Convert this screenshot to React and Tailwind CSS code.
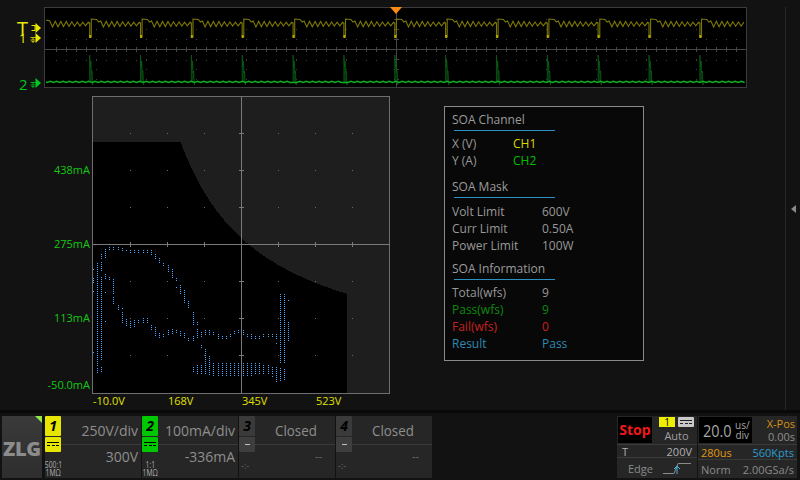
import React from "react";

const FONT = { fontFamily: '"Open Sans","Noto Sans",sans-serif' };

const PERIOD = 50.85;
const SPIKES = Array.from({ length: 14 }, (_, k) => 37.8 + PERIOD * k);

function yellowPath() {
  let d = "M45 19";
  const ripple = (from, to) => {
    let x = from;
    let up = true;
    let s = "";
    while (x < to) {
      const t = (x - from) / 40;
      const amp = 3 - 1.3 * Math.min(t, 1);
      s += `L${x.toFixed(1)} ${(23 + (up ? -amp : amp)).toFixed(1)}`;
      x += 2.75;
      up = !up;
    }
    return s;
  };
  SPIKES.forEach((p) => {
    if (p + 52 < 45) return;
    if (p >= 45) {
      d += `L${p.toFixed(1)} 22L${p.toFixed(1)} 36L${(p + 1.6).toFixed(1)} 36L${(p + 1.6).toFixed(1)} 18L${(p + 7).toFixed(1)} 18.5L${(p + 9).toFixed(1)} 21`;
    }
    const start = Math.max(p + 11, 46);
    const end = Math.min(p + PERIOD - 1, 745.5);
    if (start < end) d += ripple(start, end);
  });
  return d;
}

function greenBase() {
  let d = "M45 81";
  for (let x = 46; x <= 745; x += 3.2) {
    const phase = ((x - 37.8) % PERIOD + PERIOD) % PERIOD;
    if (phase < 1) continue;
    const y = 81 + (Math.round(x / 3.2) % 2 ? -0.7 : 0.5);
    d += `L${x.toFixed(1)} ${y.toFixed(1)}`;
  }
  return d;
}

function Scope() {
  const rows = [38, 59];
  const cols = [95, 145, 195, 245, 295, 345, 395, 445, 495, 545, 595, 645, 695];
  const dots = [];
  rows.forEach((y) => {
    for (let x = 55; x < 746; x += 10) dots.push([x, y]);
  });
  cols.forEach((x) => {
    for (let y = 18; y < 88; y += 10) if (y !== 48) dots.push([x, y]);
  });
  return (
    <div className="relative h-[81px] w-[703px] border border-[#3c3c3c] bg-black">
      <svg viewBox="44 7 701 79" className="block h-[79px] w-[701px]" shapeRendering="crispEdges">
        {dots.map(([x, y], i) => (
          <rect key={i} x={x} y={y} width="1" height="1" fill="#3d3d3d" />
        ))}
        <rect x="44" y="48" width="702" height="1" fill="#474747" />
        {Array.from({ length: 70 }, (_, i) => (
          <rect key={i} x={55 + i * 10} y="46" width="1" height="5" fill="#474747" />
        ))}
        <rect x="395" y="7" width="1" height="81" fill="#474747" />
        {[18, 28, 38, 58, 68, 78].map((y) => (
          <rect key={y} x="393" y={y} width="5" height="1" fill="#474747" />
        ))}
        <g shapeRendering="auto">
          <path d={yellowPath()} fill="none" stroke="#7c7706" strokeWidth="1.1" />
          {SPIKES.filter((p) => p >= 45 && p < 745).map((p) => (
            <g key={p}>
              <rect x={p - 0.5} y="34" width="2" height="3" fill="#b0aa00" />
              <path
                d={`M${p} 81L${p} 54L${p + 0.6} 66L${p + 1.2} 60L${p + 1.8} 72L${p + 2.4} 70L${p + 3} 84L${p + 3.6} 81`}
                fill="#06340c"
                stroke="#0a5c14"
                strokeWidth="0.8"
              />
            </g>
          ))}
          <path d={greenBase()} fill="none" stroke="#0cb022" strokeWidth="1.5" />
        </g>
      </svg>
      <div className="absolute left-[345px] top-[-1px] h-0 w-0 border-x-[6px] border-t-[7px] border-x-transparent border-t-[#ff8a12]" />
    </div>
  );
}

function GroundArrow({ color, className }) {
  return (
    <svg viewBox="0 0 11 10" className={className} width="11" height="10">
      <path d="M5.5 0L11 5L5.5 10Z" fill={color} />
      <path d="M0.5 4.5H6M3 4.5V7M0.5 7H5.5M1.5 8.5H4.5M2.5 9.5H3.5" fill="none" stroke={color} strokeWidth="0.8" />
    </svg>
  );
}

function Markers() {
  return (
    <div className="relative h-[81px] w-[44px] shrink-0">
      <span className="absolute left-[17px] top-[17px] h-[10px] text-[20px] leading-[10px] text-[#e8e800]">T</span>
      <span className="absolute left-[19px] top-[27px] h-[8px] text-[13px] leading-[8px] text-[#e8e800]">1</span>
      <svg viewBox="0 0 11 10" width="11" height="10" className="absolute left-[30px] top-[16px]">
        <path d="M5.5 0L11 5L5.5 10Z" fill="#e8e800" />
        <path d="M1.5 2.5H6M5 2.5V7.5H1.5" fill="none" stroke="#e8e800" strokeWidth="1" />
      </svg>
      <GroundArrow color="#e8e800" className="absolute left-[30px] top-[26px]" />
      <span className="absolute left-[19px] top-[69px] text-[15px] leading-[16px] text-[#00c81e]">2</span>
      <GroundArrow color="#00c81e" className="absolute left-[30px] top-[71px]" />
    </div>
  );
}

// columns of the scatter: x, then [y1, y2] runs at a 2 px step
const COLUMNS = [
  [93, [269, 269], [278, 283], [291, 291], [352, 352]],
  [97, [263, 365], [368, 372]],
  [101, [254, 258], [262, 270], [277, 360], [367, 372]],
  [105, [249, 257], [274, 278], [292, 292], [321, 321]],
  [109, [247, 249], [277, 279]],
  [113, [247, 249], [279, 293], [297, 303]],
  [118, [247, 249], [305, 309]],
  [122, [248, 250], [308, 308], [312, 322]],
  [126, [250, 250], [319, 326]],
  [130, [250, 253], [321, 327]],
  [134, [250, 253], [320, 327]],
  [138, [250, 253], [320, 323]],
  [143, [250, 253], [318, 323]],
  [147, [250, 253], [318, 323]],
  [151, [250, 255], [325, 330]],
  [155, [254, 258], [327, 335]],
  [159, [258, 262], [333, 337]],
  [163, [263, 266], [334, 337]],
  [168, [265, 271], [330, 335]],
  [172, [269, 278], [329, 333]],
  [176, [278, 280], [287, 287], [330, 333]],
  [180, [285, 293], [331, 335]],
  [184, [290, 302], [333, 338]],
  [188, [301, 308], [338, 341]],
  [193, [312, 325], [336, 341], [367, 372]],
  [197, [322, 325], [329, 338], [365, 373]],
  [201, [332, 337], [345, 347], [365, 373]],
  [205, [330, 335], [349, 362], [363, 374]],
  [209, [330, 335], [356, 375]],
  [213, [332, 334], [363, 375]],
  [218, [334, 338], [363, 375]],
  [222, [336, 338], [363, 375]],
  [226, [336, 338], [363, 375]],
  [230, [334, 336], [363, 375]],
  [234, [331, 334], [363, 375]],
  [238, [330, 333], [363, 375]],
  [243, [330, 334], [363, 375]],
  [247, [334, 336], [363, 375]],
  [251, [334, 338], [363, 375]],
  [255, [336, 338], [363, 373]],
  [259, [336, 338], [363, 373]],
  [263, [334, 336], [365, 373]],
  [268, [334, 336], [365, 373]],
  [272, [334, 336], [367, 373], [376, 376]],
  [276, [334, 338], [343, 343], [367, 381]],
  [280, [294, 362], [368, 381]],
  [284, [294, 362], [369, 380]],
  [288, [300, 300], [322, 341]],
];

function maskPoints() {
  // 100 W power limit in plot coordinates
  const pts = ["93,394", "93,142"];
  for (let v = 200; v <= 600; v += 4) {
    const x = 93 + (v + 10) / 2.397;
    const y = 393 - (100000 / v + 50) / 2.19;
    pts.push(`${x.toFixed(1)},${y.toFixed(1)}`);
  }
  pts.push("347,394");
  return pts.join(" ");
}

function Plot() {
  const gx = [130, 167, 204, 278, 315, 352];
  const gy = [133, 170, 207, 281, 318, 355];
  return (
    <div className="h-[298px] w-[298px] border border-[#6e6e6e] bg-[#1e1e1e]">
      <svg viewBox="93 97 296 296" className="block h-[296px] w-[296px]" shapeRendering="crispEdges">
        <polygon points={maskPoints()} fill="#000" />
        {gx.concat(241).map((x) =>
          gy.concat(244).map((y) => <rect key={`${x}-${y}`} x={x} y={y} width="1" height="1" fill="#6a6a6a" />)
        )}
        <rect x="241" y="97" width="1" height="296" fill="#7a7a7a" />
        <rect x="93" y="244" width="296" height="1" fill="#7a7a7a" />
        {gx.map((x) => (
          <rect key={x} x={x} y="242" width="1" height="5" fill="#7a7a7a" />
        ))}
        {gy.map((y) => (
          <rect key={y} x="239" y={y} width="5" height="1" fill="#7a7a7a" />
        ))}
        {COLUMNS.flatMap(([x, ...runs]) =>
          runs.flatMap(([a, b]) => {
            const out = [];
            for (let y = a; y <= b; y += 2) {
              out.push(<rect key={`${x}-${y}`} x={x} y={y} width="1" height="1" fill="#4aa8ff" />);
            }
            return out;
          })
        )}
      </svg>
    </div>
  );
}

function YLabels() {
  return (
    <div className="flex h-[298px] w-[92px] flex-col items-end pr-[2px] text-[11px] leading-[14px] text-[#14c814]">
      <span className="mt-[67px] h-[74px]">438mA</span>
      <span className="h-[74px]">275mA</span>
      <span className="h-[67px]">113mA</span>
      <span>-50.0mA</span>
    </div>
  );
}

function XLabels() {
  return (
    <div className="ml-[92px] flex h-[14px] text-[11px] leading-[14px] text-[#e0e000]">
      <span className="w-[76px] pl-[1px]">-10.0V</span>
      <span className="w-[74px]">168V</span>
      <span className="w-[74px]">345V</span>
      <span>523V</span>
    </div>
  );
}

function Heading({ children }) {
  return (
    <div className="flex h-[24px] w-[103px] flex-col justify-between pt-[4px]">
      <div className="text-[12px] leading-[18px] text-[#9c9c9c]">{children}</div>
      <div className="ml-[2px] h-px bg-[#2c90c0]" />
    </div>
  );
}

function Row({ label, value, cls = "text-[#989898]", valCls, col = "w-[90px]" }) {
  return (
    <div className={`flex h-[17px] text-[12px] leading-[17px] ${cls}`}>
      <span className={col}>{label}</span>
      <span className={valCls}>{value}</span>
    </div>
  );
}

function InfoPanel() {
  return (
    <div className="mt-[10px] ml-[54px] flex h-[255px] w-[200px] flex-col border border-[#8a8a8a] bg-[#080808] pl-[7px]">
      <Heading>SOA Channel</Heading>
      <div className="mt-[4px]">
        <Row label="X (V)" value="CH1" col="w-[61px]" valCls="text-[#d8d800]" />
        <Row label="Y (A)" value="CH2" col="w-[61px]" valCls="text-[#00c000]" />
      </div>
      <div className="mt-[5px]">
        <Heading>SOA Mask</Heading>
      </div>
      <div className="mt-[5px]">
        <Row label="Volt Limit" value="600V" />
        <Row label="Curr Limit" value="0.50A" />
        <Row label="Power Limit" value="100W" />
      </div>
      <div className="mt-[2px]">
        <Heading>SOA Information</Heading>
      </div>
      <div className="mt-[4px]">
        <Row label="Total(wfs)" value="9" />
        <Row label="Pass(wfs)" value="9" cls="text-[#0e8a0e]" />
        <Row label="Fail(wfs)" value="0" cls="text-[#c82020]" />
        <Row label="Result" value="Pass" cls="text-[#2c88b4]" />
      </div>
    </div>
  );
}

function DcIcon({ color = "#000", className = "" }) {
  return (
    <svg viewBox="0 0 12 5" width="12" height="5" className={className} shapeRendering="crispEdges">
      <rect x="0" y="0" width="12" height="1" fill={color} />
      <rect x="0" y="3" width="3" height="1" fill={color} />
      <rect x="4.5" y="3" width="3" height="1" fill={color} />
      <rect x="9" y="3" width="3" height="1" fill={color} />
    </svg>
  );
}

function Channel({ n, on, color, scale, offset, probe }) {
  return (
    <div className="flex h-[62px] w-[96px] bg-[#262626]">
      <div className="flex w-[16px] shrink-0 flex-col">
        <div
          className={`flex h-[20px] items-center justify-center rounded-[1px] text-[14px] font-bold italic leading-none ${on ? "text-black" : "bg-[#3a3a3a] text-black"}`}
          style={on ? { background: color } : undefined}
        >
          {n}
        </div>
        <div
          className={`mt-px flex h-[15px] items-center justify-center rounded-[1px] ${on ? "" : "bg-[#3e3e3e]"}`}
          style={on ? { background: color } : undefined}
        >
          {on ? <DcIcon /> : <div className="h-px w-[5px] bg-[#c0c0c0]" />}
        </div>
        {on ? (
          <div className="mt-[9px] flex h-[16px] flex-col items-center whitespace-nowrap text-[9px] leading-[8px] text-[#b0b0b0]">
            <div className="scale-x-[0.75]">{probe}</div>
            <div className="scale-x-[0.75]">1MΩ</div>
          </div>
        ) : (
          <div className="mt-[9px] pl-[2px] text-[9px] leading-[9px] text-[#6a6a6a]">-:-</div>
        )}
      </div>
      <div className="flex min-w-0 flex-1 flex-col text-[14px] text-[#8e8e8e]">
        <div className={`flex h-[29px] items-center border-b border-[#3a3a3a] ${on ? "justify-end pr-[3px]" : "justify-center pl-[2px]"}`}>
          {on ? scale : <span className="scale-x-[0.95]">{scale}</span>}
        </div>
        <div className={`flex flex-1 items-start justify-end ${on ? "pr-[3px] pt-[1px]" : "pr-[13px] pt-[3px] text-[11px] text-[#6a6a6a]"}`}>
          {offset}
        </div>
      </div>
    </div>
  );
}

function Logo() {
  return (
    <div className="relative flex h-[62px] w-[40px] items-center justify-center bg-gradient-to-b from-[#3a3a3a] to-[#2e2e2e]">
      <span className="mt-[3px] text-[20px] font-extrabold leading-none tracking-[-0.3px] text-[#8c8c8c]">ZLG</span>
      <div className="absolute right-0 top-0 h-0 w-0 border-l-[7px] border-t-[7px] border-l-transparent border-t-[#8fe84a]" />
    </div>
  );
}

function Trigger() {
  return (
    <div className="flex h-[62px] w-[80px] flex-col bg-[#262626]">
      <div className="flex h-[29px] gap-[5px] border-b border-[#3a3a3a] px-[1px] pt-[1px]">
        <div className="flex h-[26px] w-[34px] items-center justify-center bg-black text-[14px] font-bold leading-none text-[#f01818]">
          Stop
        </div>
        <div className="flex flex-1 flex-col items-center">
          <div className="flex gap-[3px]">
            <div className="flex h-[10px] w-[16px] items-center justify-center bg-[#eeee00] text-[10px] leading-none text-black">1</div>
            <div className="flex h-[10px] w-[16px] items-center justify-center rounded-[1px] bg-[#c8c8c8]">
              <DcIcon color="#222" />
            </div>
          </div>
          <div className="mt-[2px] text-[11px] leading-[14px] text-[#a0a0a0]">Auto</div>
        </div>
      </div>
      <div className="flex h-[13px] items-center justify-between border-b border-[#3a3a3a] px-[5px] text-[11px] leading-none text-[#b0b0b0]">
        <span>T</span>
        <span>200V</span>
      </div>
      <div className="flex flex-1 items-center justify-between pl-[11px] pr-[5px] text-[11px] leading-none text-[#8a8a8a]">
        <span>Edge</span>
        <svg viewBox="0 0 29 12" width="29" height="12" fill="none">
          <path d="M0 11.5H11L15 1.5H28" stroke="#8a8a8a" />
          <path d="M11 7L14 4L17 7M14 4V12" stroke="#46b4e6" />
        </svg>
      </div>
    </div>
  );
}

function Timebase() {
  return (
    <div className="flex h-[62px] w-[99px] flex-col bg-[#262626]">
      <div className="flex h-[29px] border-b border-[#3a3a3a] pl-[1px] pt-[1px]">
        <div className="flex h-[26px] w-[53px] items-center bg-black pl-[4px] text-[#a8a8a8]">
          <span className="w-[32px] origin-left scale-x-[0.85] whitespace-nowrap text-[17px] leading-none">20.0</span>
          <span className="text-center text-[10px] leading-[10px]">
            us/
            <br />
            div
          </span>
        </div>
        <div className="flex flex-1 flex-col items-end pr-[2px] text-[11px] leading-[13px]">
          <span className="text-[#d89010]">X-Pos</span>
          <span className="text-[#8e8e8e]">0.00s</span>
        </div>
      </div>
      <div className="flex h-[15px] items-center justify-between border-b border-[#3a3a3a] px-[3px] text-[11px] leading-none">
        <span className="text-[#e09a10]">280us</span>
        <span className="text-[#2c9cd0]">560Kpts</span>
      </div>
      <div className="flex flex-1 items-center justify-between px-[3px] text-[11px] leading-none text-[#8a8a8a]">
        <span>Norm</span>
        <span>2.00GSa/s</span>
      </div>
    </div>
  );
}

export default function App() {
  return (
    <div className="flex h-[480px] w-[800px] flex-col overflow-hidden bg-[#121212]" style={FONT}>
      <div className="flex h-[410px] shrink-0">
        <div className="flex w-[785px] flex-col pt-[7px]">
          <div className="flex">
            <Markers />
            <Scope />
          </div>
          <div className="mt-[8px] flex">
            <div>
              <div className="flex">
                <YLabels />
                <Plot />
              </div>
              <XLabels />
            </div>
            <InfoPanel />
          </div>
        </div>
        <div className="mt-[7px] flex w-[15px] items-center justify-center border-l border-[#262626]">
          <div className="h-0 w-0 border-y-[4px] border-r-[5px] border-y-transparent border-r-[#8a8a8a]" />
        </div>
      </div>
      <div className="flex flex-1 border-t-[3px] border-[#090909] pl-[2px] pt-[3px]">
        <Logo />
        <div className="ml-[3px] flex gap-[1px]">
          <Channel n="1" on color="#e6e600" scale="250V/div" offset="300V" probe="500:1" />
          <Channel n="2" on color="#00c800" scale="100mA/div" offset="-336mA" probe="1:1" />
          <Channel n="3" scale="Closed" offset="--" />
          <Channel n="4" scale="Closed" offset="--" />
        </div>
        <div className="ml-[185px] flex gap-[1px]">
          <Trigger />
          <Timebase />
        </div>
      </div>
    </div>
  );
}
